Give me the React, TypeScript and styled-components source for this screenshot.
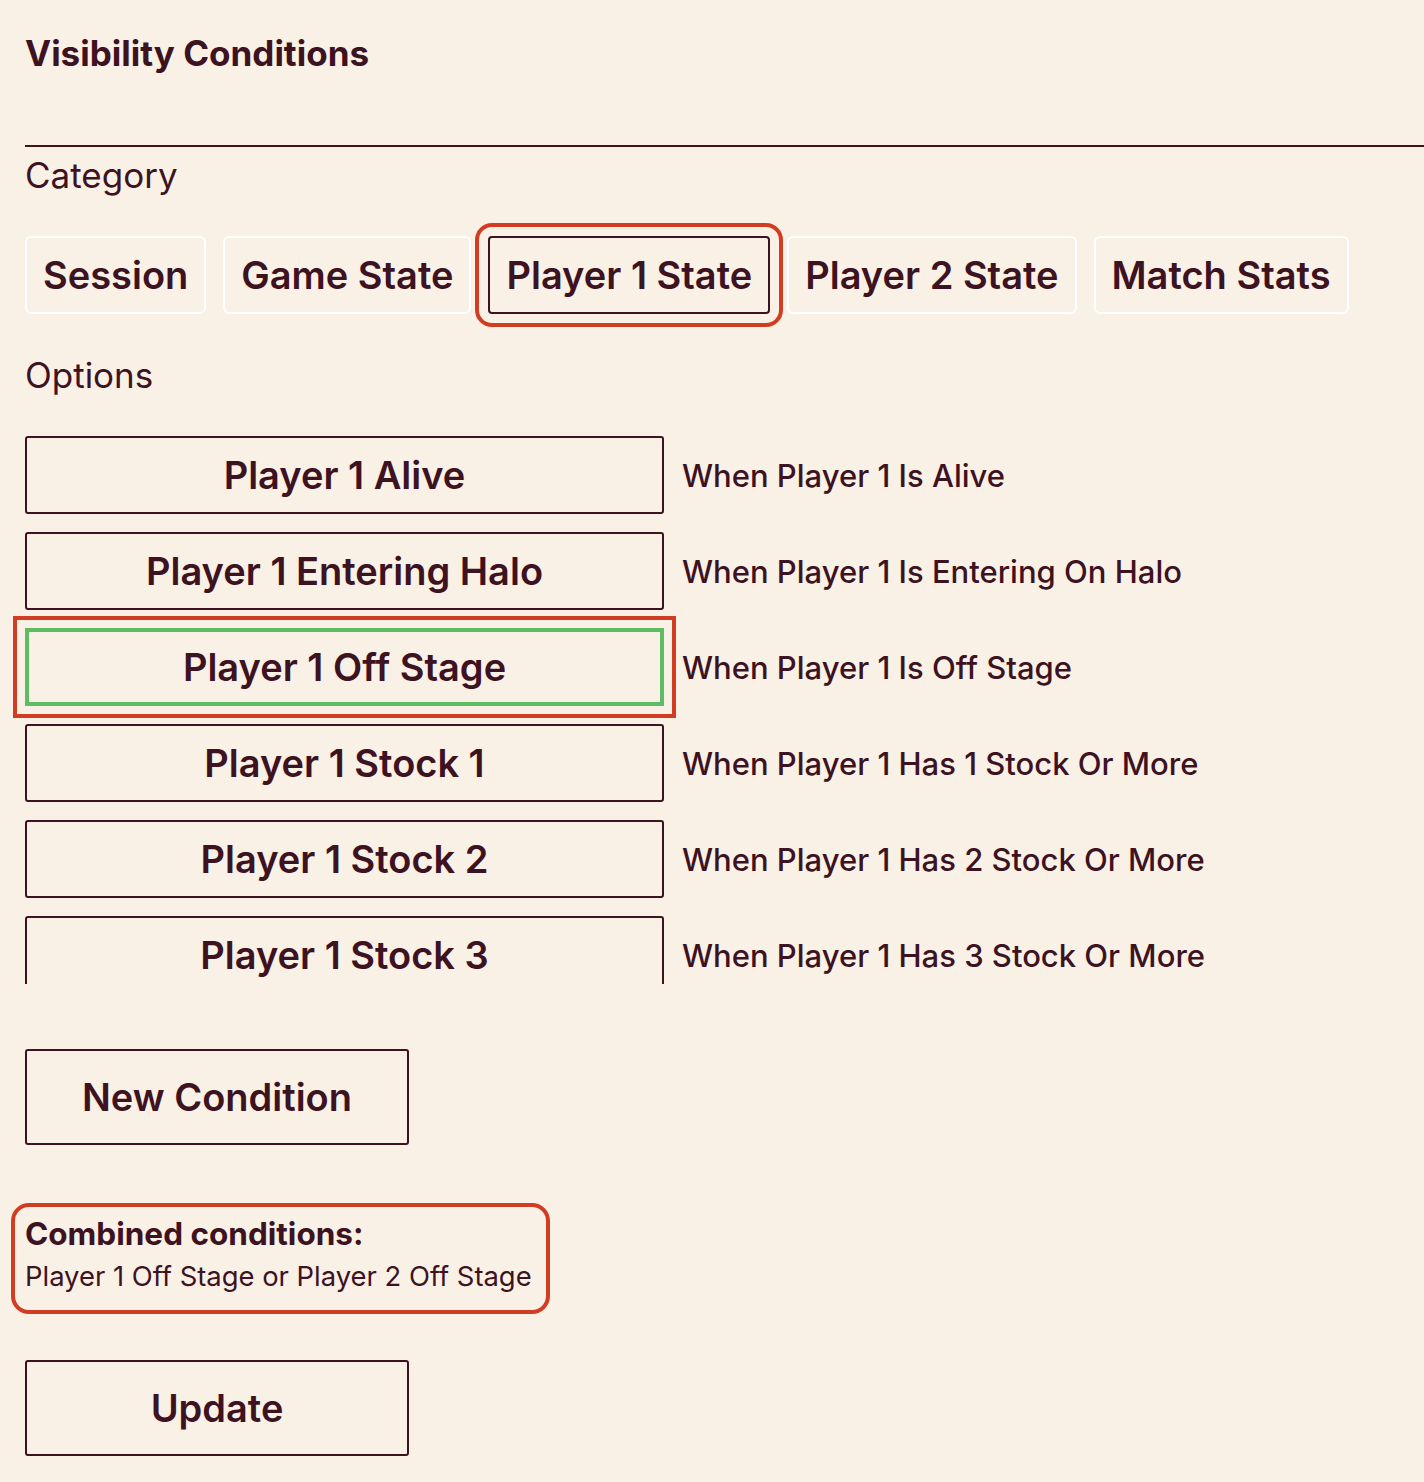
import styled, { createGlobalStyle } from "styled-components";

const ink = "#3d1221";
const paper = "#f9f0e6";
const marker = "#d23c22";

const GlobalStyle = createGlobalStyle`
    body {
        margin: 0;
        background: ${paper};
        color: ${ink};
        font-family: Inter, "Noto Sans", sans-serif;
    }
`;

const categories = ["Session", "Game State", "Player 1 State", "Player 2 State", "Match Stats"];

const options = [
    { name: "Player 1 Alive", desc: "When Player 1 Is Alive" },
    { name: "Player 1 Entering Halo", desc: "When Player 1 Is Entering On Halo" },
    { name: "Player 1 Off Stage", desc: "When Player 1 Is Off Stage" },
    { name: "Player 1 Stock 1", desc: "When Player 1 Has 1 Stock Or More" },
    { name: "Player 1 Stock 2", desc: "When Player 1 Has 2 Stock Or More" },
    { name: "Player 1 Stock 3", desc: "When Player 1 Has 3 Stock Or More" },
];

const App = () => {
    return (
        <>
        <GlobalStyle />
        <Page>
            <Title>Visibility Conditions</Title>
            <Divider />
            <Label>Category</Label>
            <TabRow>
                {categories.map((c) => (
                    <Tab key={c} $active={c === "Player 1 State"}>{c}</Tab>
                ))}
            </TabRow>
            <Label $top={42}>Options</Label>
            <OptionList>
                {options.map((o) => (
                    <OptionRow key={o.name}>
                        <OptionButton $selected={o.name === "Player 1 Off Stage"}>{o.name}</OptionButton>
                        <OptionDesc>{o.desc}</OptionDesc>
                    </OptionRow>
                ))}
            </OptionList>
            <WideButton $top={65}>New Condition</WideButton>
            <Combined>
                <CombinedTitle>Combined conditions:</CombinedTitle>
                <CombinedText>Player 1 Off Stage or Player 2 Off Stage</CombinedText>
            </Combined>
            <WideButton $top={46}>Update</WideButton>
        </Page>
        </>
    )
}

export default App;

const Page = styled.div`
    padding: 32px 0 30px 25px;
    display: flex;
    flex-direction: column;
    align-items: flex-start;
`

const Title = styled.h1`
    margin: 0;
    font-size: 35px;
    line-height: 43px;
    font-weight: 700;
`

const Divider = styled.div`
    align-self: stretch;
    height: 2px;
    background: ${ink};
    margin-top: 70px;
`

const Label = styled.div<{ $top?: number }>`
    margin-top: ${(p) => p.$top ?? 9}px;
    font-size: 35px;
    line-height: 38px;
`

const TabRow = styled.div`
    display: flex;
    gap: 17px;
    margin-top: 42px;
`

const Tab = styled.button<{ $active?: boolean }>`
    height: 78px;
    padding: 0 16px;
    background: transparent;
    color: ${ink};
    font-family: inherit;
    font-size: 38px;
    font-weight: 600;
    border: 2px solid ${(p) => (p.$active ? ink : "#ffffff")};
    border-radius: ${(p) => (p.$active ? "4px" : "6px")};
    outline: ${(p) => (p.$active ? `4px solid ${marker}` : "none")};
    outline-offset: 9px;
    cursor: pointer;
`

const OptionList = styled.div`
    margin-top: 42px;
    height: 548px;
    overflow: hidden;
    display: flex;
    flex-direction: column;
    gap: 18px;
    padding-left: 15px;
    margin-left: -15px;
    padding-right: 20px;
`

const OptionRow = styled.div`
    display: flex;
    align-items: center;
    gap: 18px;
    flex-shrink: 0;
`

const OptionButton = styled.button<{ $selected?: boolean }>`
    width: 639px;
    height: 78px;
    background: transparent;
    color: ${ink};
    font-family: inherit;
    font-size: 38px;
    font-weight: 600;
    border: ${(p) => (p.$selected ? "4px solid #5cbd62" : `2px solid ${ink}`)};
    border-radius: ${(p) => (p.$selected ? "0" : "3px")};
    outline: ${(p) => (p.$selected ? `4px solid ${marker}` : "none")};
    outline-offset: 8px;
    cursor: pointer;
`

const OptionDesc = styled.div`
    font-size: 31px;
    font-weight: 500;
`

const WideButton = styled.button<{ $top: number }>`
    margin-top: ${(p) => p.$top}px;
    width: 384px;
    height: 96px;
    background: transparent;
    color: ${ink};
    font-family: inherit;
    font-size: 38px;
    font-weight: 600;
    border: 2px solid ${ink};
    border-radius: 3px;
    cursor: pointer;
`

const Combined = styled.div`
    margin-top: 58px;
    margin-left: -14px;
    padding: 5px 14px 14px 10px;
    border: 4px solid ${marker};
    border-radius: 18px;
`

const CombinedTitle = styled.div`
    font-size: 31.5px;
    font-weight: 700;
    line-height: 44px;
`

const CombinedText = styled.div`
    font-size: 27.4px;
    line-height: 40px;
`
